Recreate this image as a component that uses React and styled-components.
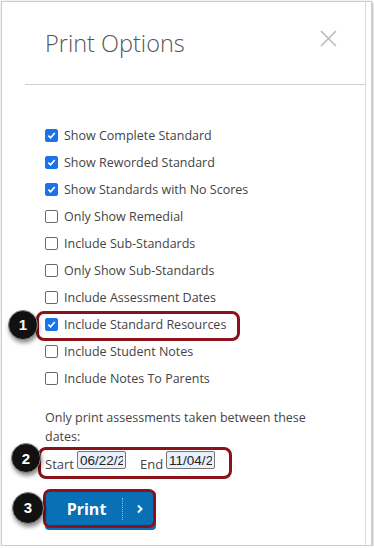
import React, { useState } from "react";
import styled, { createGlobalStyle } from "styled-components";

const GlobalStyle = createGlobalStyle`
  body {
    margin: 0;
    background: #fff;
    font-family: "Open Sans", "Liberation Sans", sans-serif;
  }
`;

const Frame = styled.div`
  margin: 1px 0 0 1px;
  width: 369px;
  height: 543px;
  border: 1px solid #cdcdcd;
  box-shadow: 1px 1px 3px rgba(0, 0, 0, 0.3);
  background: #fff;
`;

const Modal = styled.div`
  width: 363px;
  height: 100%;
  border-right: 1px solid #dadada;
`;

const Header = styled.div`
  display: flex;
  justify-content: space-between;
  align-items: flex-start;
  height: 83px;
  margin-left: 23px;
  padding: 26px 28px 0 20px;
  box-sizing: border-box;
  border-bottom: 1px solid #cfcfcf;
`;

const Title = styled.h2`
  margin: 0;
  font-size: 23.5px;
  line-height: 30px;
  font-weight: 300;
  color: #555;
`;

const Close = styled.button`
  border: 0;
  background: none;
  padding: 0;
  margin-top: 2px;
  width: 17px;
  height: 17px;
  cursor: pointer;
`;

const Body = styled.div`
  padding: 37px 0 0 43px;
`;

const Row = styled.label`
  position: relative;
  display: flex;
  align-items: center;
  gap: 6px;
  width: fit-content;
  height: 27px;
  font-size: 12.5px;
  color: #444;
  &::after {
    content: "";
    display: ${(p) => (p.$mark ? "block" : "none")};
    position: absolute;
    top: 0;
    bottom: -3px;
    left: -9px;
    right: -14px;
    border: 3px solid #8a1218;
    border-radius: 8px;
  }
`;

const Box = styled.span`
  flex: none;
  width: 13px;
  height: 13px;
  box-sizing: border-box;
  border-radius: 2px;
  border: 1px solid ${(p) => (p.$on ? "#1a73e8" : "#6b6b6b")};
  background: ${(p) => (p.$on ? "#1a73e8" : "#fff")};
  display: flex;
  align-items: center;
  justify-content: center;
`;

const Badge = styled.span`
  position: absolute;
  z-index: 2;
  left: ${(p) => p.$left}px;
  top: 50%;
  margin-top: ${(p) => p.$dy || 0}px;
  transform: translateY(-50%);
  width: ${(p) => p.$size || 28}px;
  height: ${(p) => p.$size || 28}px;
  border-radius: 50%;
  background: #111;
  border: 1px solid #888;
  box-shadow: 1px 3px 4px rgba(0, 0, 0, 0.45);
  color: #fff;
  font: bold 15px "Liberation Sans", Arial, sans-serif;
  display: flex;
  align-items: center;
  justify-content: center;
`;

const Note = styled.p`
  margin: 16px 0 0 0;
  width: 270px;
  font-size: 12.5px;
  line-height: 19px;
  color: #444;
`;

const Dates = styled.div`
  position: relative;
  display: flex;
  align-items: center;
  width: fit-content;
  height: 24px;
  margin-top: 4px;
  font-size: 13px;
  color: #444;
  &::after {
    content: "";
    position: absolute;
    top: -3px;
    bottom: -5px;
    left: -7px;
    right: -17px;
    border: 3px solid #8a1218;
    border-radius: 8px;
  }
`;

const DateLabel = styled.span`
  margin: 3px 3px 0 ${(p) => (p.$gap ? 14 : 0)}px;
`;

const DateInput = styled.input`
  width: 49px;
  height: 18px;
  box-sizing: border-box;
  padding: 0 2px;
  border: 1px solid #777;
  border-radius: 2px;
  background: #e8f0fe;
  font: 13.5px "Liberation Sans", Arial, sans-serif;
  color: #222;
  margin-bottom: 4px;
`;

const ButtonWrap = styled.div`
  position: relative;
  width: fit-content;
  margin-top: 17px;
  &::after {
    content: "";
    position: absolute;
    top: -2px;
    bottom: 2px;
    left: -2px;
    right: 0;
    border: 3px solid #8a1218;
    border-radius: 7px;
  }
`;

const PrintButton = styled.button`
  display: flex;
  align-items: center;
  width: 111px;
  height: 39px;
  padding: 0;
  border: 0;
  border-radius: 4px;
  background: #0a70b5;
  color: #fff;
  font: bold 16px "Open Sans", "Liberation Sans", sans-serif;
  cursor: pointer;
`;

const ButtonText = styled.span`
  flex: 1;
  text-align: center;
  padding-left: 6px;
  margin-bottom: 3px;
`;

const Split = styled.span`
  width: 33px;
  height: 22px;
  border-left: 1px dotted rgba(255, 255, 255, 0.55);
  display: flex;
  align-items: center;
  justify-content: center;
  margin-bottom: 3px;
`;

const options = [
  ["Show Complete Standard", true],
  ["Show Reworded Standard", true],
  ["Show Standards with No Scores", true],
  ["Only Show Remedial", false],
  ["Include Sub-Standards", false],
  ["Only Show Sub-Standards", false],
  ["Include Assessment Dates", false],
  ["Include Standard Resources", true],
  ["Include Student Notes", false],
  ["Include Notes To Parents", false],
];

function Check({ on }) {
  return (
    <Box $on={on}>
      {on && (
        <svg width="9" height="9" viewBox="0 0 10 10">
          <path d="M1.5 5.2 L4 7.6 L8.6 2.2" fill="none" stroke="#fff" strokeWidth="1.9" />
        </svg>
      )}
    </Box>
  );
}

export default function App() {
  const [checked, setChecked] = useState(options.map((o) => o[1]));

  return (
    <Frame>
      <GlobalStyle />
      <Modal>
        <Header>
          <Title>Print Options</Title>
          <Close aria-label="Close">
            <svg width="17" height="17" viewBox="0 0 17 17">
              <path d="M1 1 L16 16 M16 1 L1 16" stroke="#b9b9b9" strokeWidth="1.5" />
            </svg>
          </Close>
        </Header>
        <Body>
          {options.map(([label], i) => (
            <Row
              key={label}
              $mark={i === 7}
              onClick={() => setChecked(checked.map((c, j) => (j === i ? !c : c)))}
            >
              {i === 7 && <Badge $left={-37}>1</Badge>}
              <Check on={checked[i]} />
              {label}
            </Row>
          ))}
          <Note>Only print assessments taken between these dates:</Note>
          <Dates>
            <Badge $left={-34} $dy={-4}>2</Badge>
            <DateLabel>Start</DateLabel>
            <DateInput defaultValue="06/22/2020" />
            <DateLabel $gap>End</DateLabel>
            <DateInput defaultValue="11/04/2020" />
          </Dates>
          <ButtonWrap>
            <Badge $left={-33} $dy={-3} $size={30}>3</Badge>
            <PrintButton>
              <ButtonText>Print</ButtonText>
              <Split>
                <svg width="8" height="10" viewBox="0 0 8 10">
                  <path d="M2 1.5 L5.5 5 L2 8.5" fill="none" stroke="#fff" strokeWidth="2" />
                </svg>
              </Split>
            </PrintButton>
          </ButtonWrap>
        </Body>
      </Modal>
    </Frame>
  );
}
